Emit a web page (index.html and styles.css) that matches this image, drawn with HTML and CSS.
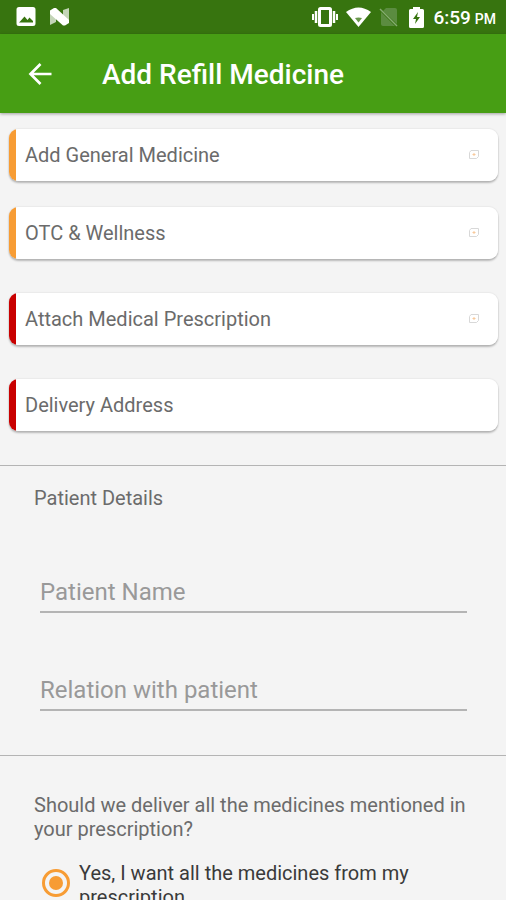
FILE: index.html
```html
<!DOCTYPE html>
<html lang="en">
<head>
<meta charset="utf-8">
<meta name="viewport" content="width=device-width, initial-scale=1">
<title>Add Refill Medicine</title>
<link rel="stylesheet" href="styles.css">
</head>
<body>
<div class="app">
  <div class="status">
    <svg class="icon" width="20" height="20" viewBox="0 0 20 20" aria-hidden="true"><path fill="#fff" fill-rule="evenodd" d="M3 0h14a2.500 2.500 0 0 1 2.500 2.500v14a2.500 2.500 0 0 1-2.500 2.500H3a2.500 2.500 0 0 1-2.500-2.500v-14A2.500 2.500 0 0 1 3 0zM3 15.500h14v-1.500l-3.500-3.500-2 2.500-3-3.500-4 4.500z"/></svg>
    <svg class="icon" width="22" height="20" viewBox="0 0 22 20" aria-hidden="true"><path fill="#c3d5b7" d="M1 4l6 4v7l-6 3zM14 3l6-2v15l-6-4z"/><path fill="#fff" d="M1 3.500L5 1h2l13 12v3l-4 2.500h-2L1 7z"/></svg>
    <span class="spacer"></span>
    <svg class="icon" width="28" height="20" viewBox="0 0 28 20" aria-hidden="true"><rect x="8.500" y="1.500" width="11" height="17" rx="1" fill="none" stroke="#fff" stroke-width="3"/><path d="M5 4v12M23 4v12" stroke="#fff" stroke-width="2.500"/><path d="M2 7v6M26 7v6" stroke="#fff" stroke-width="2"/></svg>
    <svg class="icon wifi" width="25" height="20" viewBox="0 0 25 20" aria-hidden="true"><path fill="#fff" d="M0 5Q12.500-4 25 5L12.500 20z"/><path fill="#37740f" opacity=".75" d="M9 11q3.500-1 7 0l-3.500 4.500z"/></svg>
    <svg class="icon sim" width="20" height="20" viewBox="0 0 20 20" aria-hidden="true"><path fill="#5b8c40" d="M7 1h9q2 0 2 2v14L4 4zM2 5l14 14H4q-2 0-2-2z"/><path d="M1 2l17 17" stroke="#86ac72" stroke-width="1.500"/></svg>
    <svg class="icon battery" width="15" height="21" viewBox="0 0 15 21" aria-hidden="true"><path fill="#fff" d="M4 0h7v2h2.500q1.500 0 1.500 1.500v16q0 1.500-1.500 1.500h-12Q0 21 0 19.500v-16Q0 2 1.500 2H4z"/><path fill="#37740f" d="M9 5L4 12h3l-1 5 5-7H8z"/></svg>
    <span class="clock"><span>6:59</span><small>PM</small></span>
  </div>
  <header class="bar">
    <button class="back" type="button" aria-label="Back"><svg width="24" height="24" viewBox="0 0 24 24" aria-hidden="true"><path d="M23.500 12H3M12.500 2L2.500 12l10 10" fill="none" stroke="#fff" stroke-width="2.700"/></svg></button>
    <h1>Add Refill Medicine</h1>
  </header>
  <main class="content">
    <section class="cards">
      <button class="card" type="button"><span>Add General Medicine</span><svg width="12" height="12" viewBox="0 0 12 12" aria-hidden="true"><path class="leaf" d="M3 1.500h7.500v6L8.500 9.500h-7v-6z"/><path class="dot" d="M6 4v3M4.500 5.500h3"/></svg></button>
      <button class="card" type="button"><span>OTC &amp; Wellness</span><svg width="12" height="12" viewBox="0 0 12 12" aria-hidden="true"><path class="leaf" d="M3 1.500h7.500v6L8.500 9.500h-7v-6z"/><path class="dot" d="M6 4v3M4.500 5.500h3"/></svg></button>
      <button class="card required" type="button"><span>Attach Medical Prescription</span><svg width="12" height="12" viewBox="0 0 12 12" aria-hidden="true"><path class="leaf" d="M3 1.500h7.500v6L8.500 9.500h-7v-6z"/><path class="dot" d="M6 4v3M4.500 5.500h3"/></svg></button>
      <button class="card required" type="button"><span>Delivery Address</span></button>
    </section>
    <section class="panel patient">
      <h2>Patient Details</h2>
      <input type="text" placeholder="Patient Name" aria-label="Patient Name">
      <input type="text" placeholder="Relation with patient" aria-label="Relation with patient">
    </section>
    <fieldset class="panel delivery">
      <legend>Should we deliver all the medicines mentioned in your prescription?</legend>
      <label class="option"><input type="radio" name="deliver" checked><span>Yes, I want all the medicines from my prescription</span></label>
    </fieldset>
  </main>
</div>
</body>
</html>
```
FILE: styles.css
```css
* {
  box-sizing: border-box;
}

body {
  margin: 0;
  background: #f4f4f4;
  color: #6b6b6b;
  font-family: Roboto, "Liberation Sans", sans-serif;
  font-size: 20px;
  line-height: 24px;
}

button,
input {
  margin: 0;
  border: 0;
  font: inherit;
  color: inherit;
}

.app {
  display: flex;
  flex-direction: column;
  height: 100vh;
}

.status {
  display: flex;
  flex: none;
  align-items: center;
  height: 34px;
  padding: 0 10px 0 16px;
  background: #37740f;
  color: #fff;
}

.icon {
  flex: none;
  margin-right: 13px;
}

.spacer {
  flex: 1;
}

.status .spacer + .icon {
  margin-right: 7px;
}

.status .wifi {
  margin-right: 8px;
}

.status .sim {
  margin-right: 10px;
}

.status .battery {
  margin-right: 9px;
}

.clock {
  display: flex;
  align-items: baseline;
  gap: 4px;
  padding-top: 3px;
  font-size: 19px;
  font-weight: 500;
  white-space: nowrap;
}

.clock small {
  font-size: 14px;
}

.bar {
  position: relative;
  display: flex;
  flex: none;
  align-items: center;
  height: 79px;
  padding: 0 28px;
  background: #479e14;
  color: #fff;
  box-shadow: 0 1px 3px rgba(0, 0, 0, 0.35);
}

.back {
  width: 74px;
  height: 24px;
  padding: 0;
  background: none;
  text-align: left;
}

.back svg {
  display: block;
}

h1 {
  margin: 0;
  padding-top: 2px;
  font-size: 28px;
  line-height: 32px;
  font-weight: 500;
}

.content {
  flex: 1;
  min-height: 0;
  overflow-y: auto;
  scrollbar-width: none;
}

.cards {
  display: flex;
  flex-direction: column;
  gap: 26px;
  padding: 16px 8px 34px 9px;
}

.card {
  display: flex;
  align-items: center;
  justify-content: space-between;
  height: 52px;
  padding: 0 18px 0 16px;
  border-radius: 9px;
  background: linear-gradient(90deg, #f79c34 7px, #fff 7px);
  box-shadow: 0 2px 2px rgba(0, 0, 0, 0.24), 0 0 2px rgba(0, 0, 0, 0.14);
  text-align: left;
}

.card.required {
  margin-top: 8px;
  background: linear-gradient(90deg, #c90000 7px, #fff 7px);
}

.leaf {
  fill: #fff;
  stroke: #d8d8d8;
}

.dot {
  stroke: #f8c99b;
}

.panel {
  border: 0;
  border-top: 1px solid #b4b4b4;
}

.patient {
  padding: 20px 39px 44px 40px;
}

h2 {
  margin: 0 0 0 -6px;
  font-size: 20px;
  line-height: 24px;
  font-weight: 400;
}

.patient input {
  display: block;
  width: 100%;
  height: 40px;
  margin-top: 58px;
  padding: 0;
  border-bottom: 2px solid #b4b4b4;
  border-radius: 0;
  background: none;
  font-size: 24px;
  outline: none;
}

.patient h2 + input {
  margin-top: 63px;
}

.patient input::placeholder {
  color: #999;
  opacity: 1;
}

.delivery {
  min-width: 0;
  margin: 0;
  padding: 37px 34px 24px;
}

.delivery legend {
  float: left;
  width: 100%;
  padding: 0;
}

.option {
  display: flex;
  align-items: center;
  gap: 9px;
  clear: both;
  padding: 20px 0 0 8px;
  color: #3a3a3a;
}

.option input {
  display: grid;
  flex: none;
  place-items: center;
  width: 28px;
  height: 28px;
  margin-top: -4px;
  border: 3px solid #f79c34;
  border-radius: 50%;
  appearance: none;
}

.option input:checked::before {
  content: "";
  width: 14px;
  height: 14px;
  border-radius: 50%;
  background: #f79c34;
}
```
